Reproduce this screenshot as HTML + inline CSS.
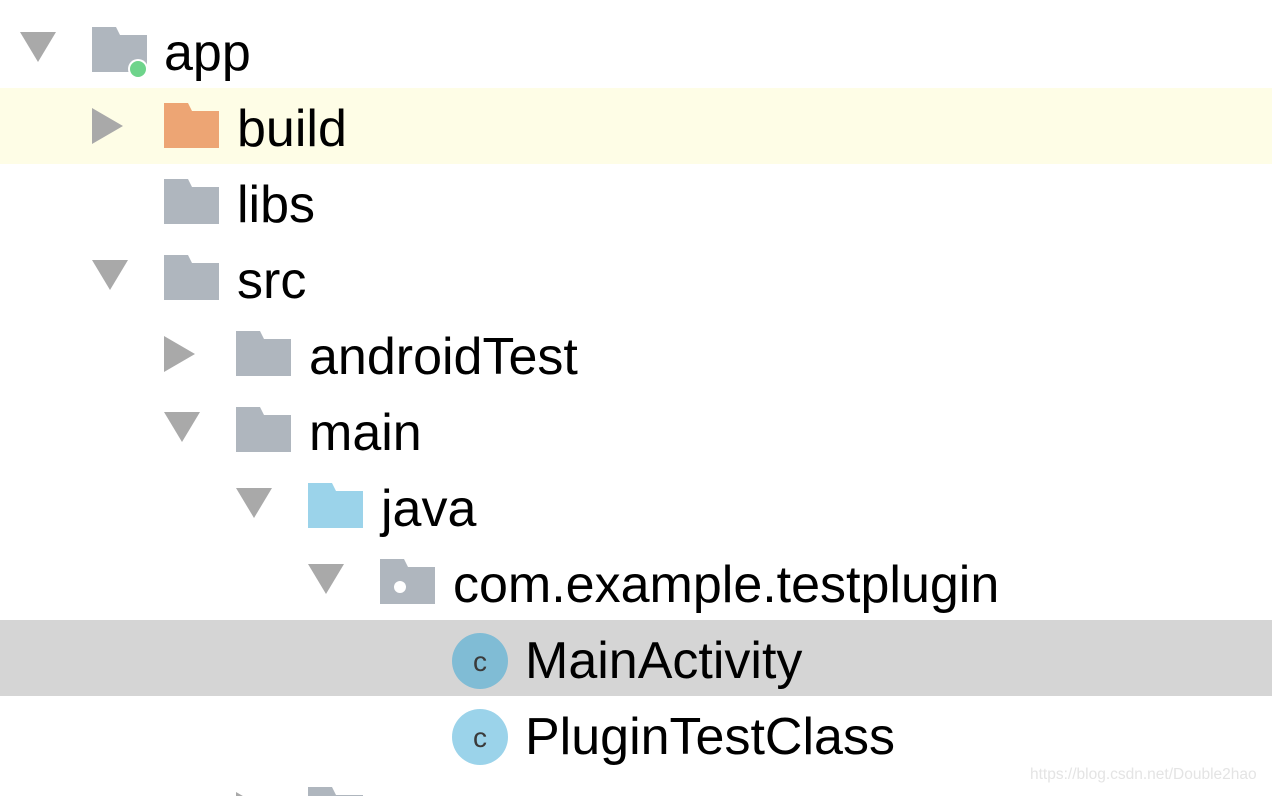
<!DOCTYPE html>
<html><head><meta charset="utf-8"><style>
html,body{margin:0;padding:0;width:1272px;height:796px;overflow:hidden;background:#fff;position:relative;font-family:"Liberation Sans",Arial,sans-serif}
.row{position:absolute;left:0;width:1272px;height:76px;overflow:hidden}
.t{position:absolute;font-size:52px;line-height:1;color:#000;top:15px;white-space:nowrap}
svg{position:absolute;top:0}
</style></head><body>
<div class="row" style="top:12px">
 <svg style="left:0" width="160" height="76"><polygon points="20,20 56,20 38,50" fill="#a9a9a9"/><path d="M92 15H116L120 23H147V60H92Z" fill="#afb6be"/><circle cx="138" cy="57" r="10" fill="#fff"/><circle cx="138" cy="57" r="8" fill="#6ed48b"/></svg>
 <div class="t" style="left:164px">app</div></div>
<div class="row" style="top:88px;background:#fefde6">
 <svg style="left:0" width="230" height="76"><polygon points="92,20 123,38 92,56" fill="#a9a9a9"/><path d="M164 15H188L192 23H219V60H164Z" fill="#eda574"/></svg>
 <div class="t" style="left:237px">build</div></div>
<div class="row" style="top:164px">
 <svg style="left:0" width="230" height="76"><path d="M164 15H188L192 23H219V60H164Z" fill="#afb6be"/></svg>
 <div class="t" style="left:237px">libs</div></div>
<div class="row" style="top:240px">
 <svg style="left:0" width="230" height="76"><polygon points="92,20 128,20 110,50" fill="#a9a9a9"/><path d="M164 15H188L192 23H219V60H164Z" fill="#afb6be"/></svg>
 <div class="t" style="left:237px">src</div></div>
<div class="row" style="top:316px">
 <svg style="left:0" width="300" height="76"><polygon points="164,20 195,38 164,56" fill="#a9a9a9"/><path d="M236 15H260L264 23H291V60H236Z" fill="#afb6be"/></svg>
 <div class="t" style="left:309px">androidTest</div></div>
<div class="row" style="top:392px">
 <svg style="left:0" width="300" height="76"><polygon points="164,20 200,20 182,50" fill="#a9a9a9"/><path d="M236 15H260L264 23H291V60H236Z" fill="#afb6be"/></svg>
 <div class="t" style="left:309px">main</div></div>
<div class="row" style="top:468px">
 <svg style="left:0" width="370" height="76"><polygon points="236,20 272,20 254,50" fill="#a9a9a9"/><path d="M308 15H332L336 23H363V60H308Z" fill="#9bd3ea"/></svg>
 <div class="t" style="left:381px">java</div></div>
<div class="row" style="top:544px">
 <svg style="left:0" width="440" height="76"><polygon points="308,20 344,20 326,50" fill="#a9a9a9"/><path d="M380 15H404L408 23H435V60H380Z" fill="#afb6be"/><circle cx="400" cy="43" r="6" fill="#fff"/></svg>
 <div class="t" style="left:453px">com.example.testplugin</div></div>
<div class="row" style="top:620px;background:#d5d5d5">
 <svg style="left:0" width="520" height="76"><circle cx="480" cy="41" r="28" fill="#80bcd5"/><text x="480" y="51" font-family="Liberation Sans" font-size="28" fill="#3a3a3a" text-anchor="middle">c</text></svg>
 <div class="t" style="left:525px">MainActivity</div></div>
<div class="row" style="top:696px">
 <svg style="left:0" width="520" height="76"><circle cx="480" cy="41" r="28" fill="#9bd3ea"/><text x="480" y="51" font-family="Liberation Sans" font-size="28" fill="#3a3a3a" text-anchor="middle">c</text></svg>
 <div class="t" style="left:525px">PluginTestClass</div></div>
<div class="row" style="top:772px;height:24px">
 <svg style="left:0" width="370" height="24"><polygon points="236,20 267,38 236,56" fill="#a9a9a9"/><path d="M308 15H332L336 23H363V60H308Z" fill="#afb6be"/></svg></div>
<div style="position:absolute;left:1030px;top:766px;font-size:15.5px;color:#e4e4e4">https://blog.csdn.net/Double2hao</div>
</body></html>
